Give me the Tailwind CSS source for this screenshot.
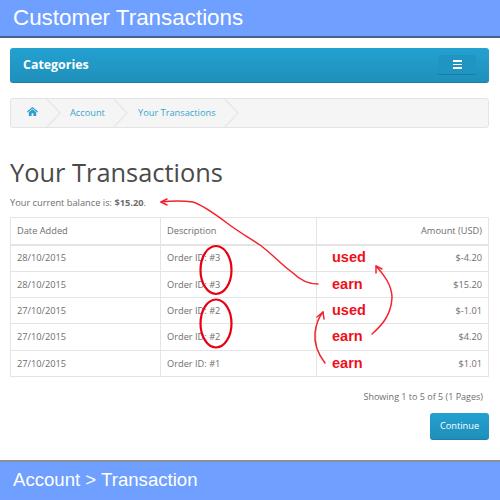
<!DOCTYPE html>
<html lang="en">
<head>
    <meta charset="UTF-8">
    <title>Customer Transactions</title>
    <script src="https://cdn.jsdelivr.net/npm/@tailwindcss/browser@4"></script>
</head>
<body class="relative w-[500px] h-[500px] overflow-hidden bg-white font-['Open_Sans',sans-serif] text-[9.25px] text-[#6e6e6e]">
    <!-- Top banner -->
    <header class="h-[38px] bg-[#6f9fff] border-b-2 border-[#4a5f8c] pl-[13px] font-['Liberation_Sans',sans-serif] text-[22.4px] leading-[36px] text-white">Customer Transactions</header>

    <div class="pl-[10px] pr-[11px]">
        <!-- Categories nav -->
        <nav class="mt-[10px] h-[35px] flex items-center justify-between rounded-[3px] bg-gradient-to-b from-[#23a1d1] to-[#1f90bb] border-b border-[#1f7fa6] pl-[13px] pr-[13px]">
            <span class="text-[12.4px] font-bold text-white">Categories</span>
            <button class="w-[38px] h-[20px] flex flex-col items-center justify-center gap-[2px] rounded-[2px] bg-[#2095c2] border-b border-[#1a7ba3]">
                <span class="block w-[9px] h-[1.5px] bg-white"></span>
                <span class="block w-[9px] h-[1.5px] bg-white"></span>
                <span class="block w-[9px] h-[1.5px] bg-white"></span>
            </button>
        </nav>

        <!-- Breadcrumb -->
        <div class="relative mt-[15px] h-[30px] rounded-[3px] border border-[#e4e4e4] bg-[#f5f5f5] flex items-center text-[#35a5ce]">
            <svg class="absolute left-0 top-0" width="240" height="28" viewBox="0 0 240 28" fill="none" stroke="#e6e6e6" stroke-width="1.2">
                <path d="M36 0 L49 14 L36 28"/>
                <path d="M103 0 L116 14 L103 28"/>
                <path d="M214 0 L227 14 L214 28"/>
            </svg>
            <svg class="absolute left-[16px] top-[8px]" width="11" height="9" viewBox="0 0 11 9" fill="#2a9fd0">
                <path d="M5.5 0 L11 4.6 L10.2 5.4 L5.5 1.6 L0.8 5.4 L0 4.6 Z"/>
                <path d="M1.8 5.2 L5.5 2.3 L9.2 5.2 V9 H6.4 V6.2 H4.6 V9 H1.8 Z"/>
            </svg>
            <span class="absolute left-[59px] top-[7px]">Account</span>
            <span class="absolute left-[127px] top-[7px]">Your Transactions</span>
        </div>

        <h1 class="mt-[25px] text-[25.4px] leading-[38px] text-[#4a4a4a]">Your Transactions</h1>
        <p class="mt-[5px] leading-[14px]">Your current balance is: <b>$15.20</b>.</p>

        <!-- Transactions table -->
        <table class="mt-[7px] w-full h-[160px] table-fixed border-collapse">
            <thead>
                <tr class="h-[27px] border-b-2 border-[#e4e4e4]">
                    <td class="w-[150px] border border-[#e4e4e4] px-[6px]">Date Added</td>
                    <td class="w-[156px] border border-[#e4e4e4] px-[6px]">Description</td>
                    <td class="border border-[#e4e4e4] px-[6px] text-right">Amount (USD)</td>
                </tr>
            </thead>
            <tbody>
                <tr class="h-[27px]">
                    <td class="border border-[#e4e4e4] px-[6px]">28/10/2015</td>
                    <td class="border border-[#e4e4e4] px-[6px]">Order ID: #3</td>
                    <td class="border border-[#e4e4e4] pl-[15px] pr-[6px]"><div class="flex items-center justify-between"><span class="font-['Liberation_Sans',sans-serif] font-bold text-[14.5px] text-[#ee0f1a]">used</span><span>$-4.20</span></div></td>
                </tr>
                <tr class="h-[26px]">
                    <td class="border border-[#e4e4e4] px-[6px]">28/10/2015</td>
                    <td class="border border-[#e4e4e4] px-[6px]">Order ID: #3</td>
                    <td class="border border-[#e4e4e4] pl-[15px] pr-[6px]"><div class="flex items-center justify-between"><span class="font-['Liberation_Sans',sans-serif] font-bold text-[14.5px] text-[#ee0f1a]">earn</span><span>$15.20</span></div></td>
                </tr>
                <tr class="h-[26px]">
                    <td class="border border-[#e4e4e4] px-[6px]">27/10/2015</td>
                    <td class="border border-[#e4e4e4] px-[6px]">Order ID: #2</td>
                    <td class="border border-[#e4e4e4] pl-[15px] pr-[6px]"><div class="flex items-center justify-between"><span class="font-['Liberation_Sans',sans-serif] font-bold text-[14.5px] text-[#ee0f1a]">used</span><span>$-1.01</span></div></td>
                </tr>
                <tr class="h-[27px]">
                    <td class="border border-[#e4e4e4] px-[6px]">27/10/2015</td>
                    <td class="border border-[#e4e4e4] px-[6px]">Order ID: #2</td>
                    <td class="border border-[#e4e4e4] pl-[15px] pr-[6px]"><div class="flex items-center justify-between"><span class="font-['Liberation_Sans',sans-serif] font-bold text-[14.5px] text-[#ee0f1a]">earn</span><span>$4.20</span></div></td>
                </tr>
                <tr class="h-[26px]">
                    <td class="border border-[#e4e4e4] px-[6px]">27/10/2015</td>
                    <td class="border border-[#e4e4e4] px-[6px]">Order ID: #1</td>
                    <td class="border border-[#e4e4e4] pl-[15px] pr-[6px]"><div class="flex items-center justify-between"><span class="font-['Liberation_Sans',sans-serif] font-bold text-[14.5px] text-[#ee0f1a]">earn</span><span>$1.01</span></div></td>
                </tr>
            </tbody>
        </table>

        <p class="mt-[13px] pr-[6px] text-right text-[9px] leading-[14px]">Showing 1 to 5 of 5 (1 Pages)</p>
        <div class="mt-[9px] flex justify-end">
            <button class="w-[59px] h-[27px] rounded-[3px] bg-gradient-to-b from-[#23a1d1] to-[#1f8fba] border-b border-[#1f7fa6] text-white">Continue</button>
        </div>
    </div>

    <!-- Bottom banner -->
    <footer class="absolute left-0 bottom-0 w-full h-[40px] bg-[#6f9fff] border-t-2 border-[#8a8f98] pl-[13px] font-['Liberation_Sans',sans-serif] text-[18.6px] leading-[36px] text-white">Account &gt; Transaction</footer>

    <!-- Hand-drawn annotations -->
    <svg class="absolute left-0 top-0 pointer-events-none" width="500" height="500" viewBox="0 0 500 500" fill="none" stroke="#f5222d" stroke-width="1.5" stroke-linecap="round" stroke-linejoin="round">
        <ellipse cx="216" cy="270" rx="15.5" ry="24" stroke="#e8000f" stroke-width="2.2"/>
        <ellipse cx="216" cy="323.5" rx="15.5" ry="24" stroke="#e8000f" stroke-width="2.2"/>
        <path d="M161 202 C170 201 185 201 193 202 C203 205 215 214 227 223 C240 233 250 238 260 245 C272 254 282 265 293 273 C300 280 308 284 318 284"/>
        <path d="M161 202 L167 199 M161 202 L167 205"/>
        <path d="M372 334 C381 326 391 316 392 298 C392 285 384 275 376 266"/>
        <path d="M376 266 L376 273 M376 266 L382 269"/>
        <path d="M325 363 C318 354 314 344 315 333 C316 324 319 317 323 312"/>
        <path d="M323 312 L317 317 M323 312 L324 319"/>
    </svg>
</body>
</html>
